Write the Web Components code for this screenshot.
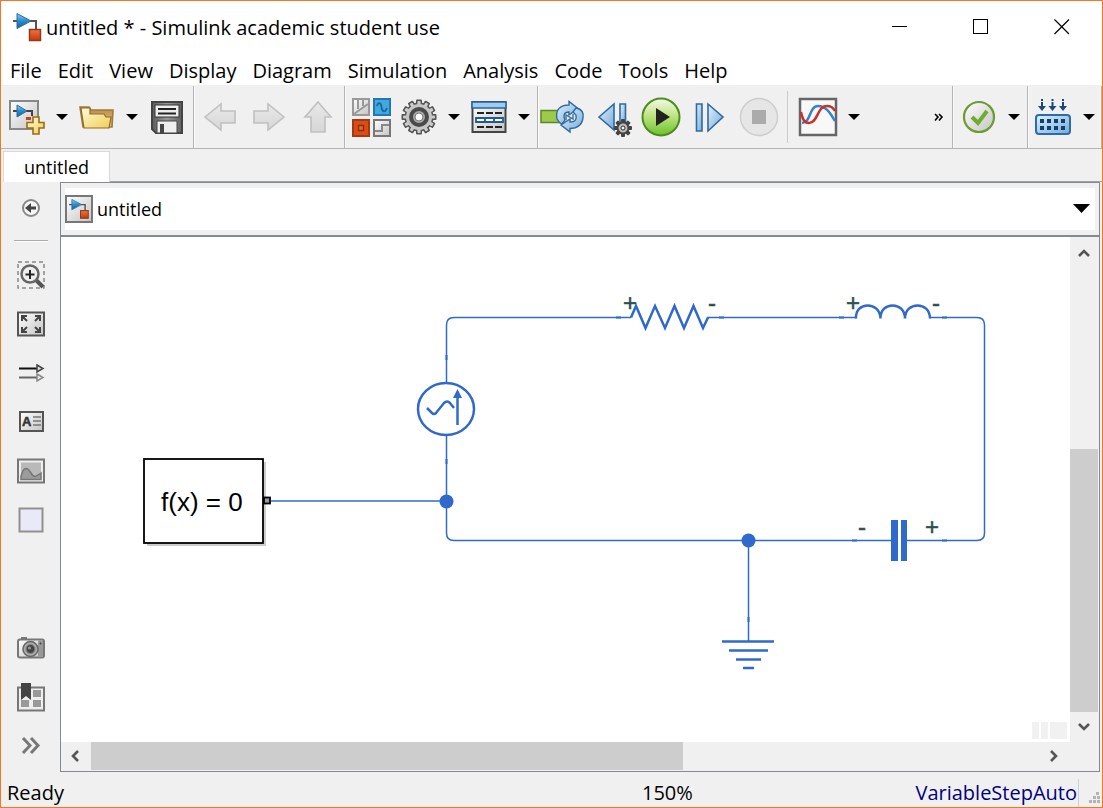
<!DOCTYPE html>
<html lang="en">
<head>
<meta charset="utf-8">
<title>untitled * - Simulink academic student use</title>
<style>
  body { margin: 0; font-family: "Open Sans", "Noto Sans", sans-serif; font-size: 20px; color: #000; }
</style>
</head>
<body>
<app-window></app-window>

<template id="icon-defs">
  <style>
    :host { display: block; line-height: 0; }
    svg { display: block; overflow: visible; }
  </style>
  <svg width="0" height="0" aria-hidden="true">
    <defs>
      <linearGradient id="grey" x1="0" y1="0" x2="1" y2="1"><stop offset="0" stop-color="#fff"/><stop offset="1" stop-color="#c4c4c4"/></linearGradient>
      <linearGradient id="dark" x1="0" y1="0" x2="1" y2="0"><stop offset="0" stop-color="#5c5c5c"/><stop offset=".5" stop-color="#999"/><stop offset="1" stop-color="#606060"/></linearGradient>
      <linearGradient id="pale" x1="0" y1="0" x2="0" y2="1"><stop offset="0" stop-color="#e9e9e9"/><stop offset="1" stop-color="#d6d6d6"/></linearGradient>
      <linearGradient id="blue" x1="0" y1="0" x2="1" y2="1"><stop offset="0" stop-color="#e2f1fd"/><stop offset="1" stop-color="#72abd9"/></linearGradient>
      <linearGradient id="deep" x1="0" y1="0" x2="0" y2="1"><stop offset="0" stop-color="#8fd0f2"/><stop offset=".5" stop-color="#2a8cc8"/><stop offset="1" stop-color="#1a5f9c"/></linearGradient>
      <linearGradient id="red" x1="0" y1="0" x2="0" y2="1"><stop offset="0" stop-color="#ec7545"/><stop offset="1" stop-color="#c9370b"/></linearGradient>
      <linearGradient id="gold" x1="0" y1="0" x2="1" y2="1"><stop offset="0" stop-color="#fffbd8"/><stop offset="1" stop-color="#f0ce55"/></linearGradient>
      <linearGradient id="tan" x1="0" y1="0" x2="0" y2="1"><stop offset="0" stop-color="#b98646"/><stop offset="1" stop-color="#e6c78f"/></linearGradient>
      <linearGradient id="green" x1="0" y1="0" x2="0" y2="1"><stop offset="0" stop-color="#f4fbe6"/><stop offset=".5" stop-color="#b9e37c"/><stop offset="1" stop-color="#6cc12c"/></linearGradient>
    </defs>
  </svg>
</template>

<script>
const SIMULINK_MARK = `
  <path d="M0 8H5M17 8H23V17" fill="none" stroke="#555" stroke-width="2"/>
  <path d="M4 0.5L18 8L4 15.5Z" fill="url(#deep)" stroke="#2a6da3"/>
  <rect x="16.5" y="16.5" width="11" height="11" fill="url(#red)" stroke="#8f3a1a" stroke-width="1.5"/>`;

const teeth = (cx, cy, r, n, w, h, fill) => Array.from({ length: n }, (_, i) =>
  `<rect x="${cx - w / 2}" y="${cy - r - h}" width="${w}" height="${h + 2}" rx="1" fill="${fill}" transform="rotate(${i * 360 / n} ${cx} ${cy})"/>`).join('');

/* name: [box size, drawing] */
const ICONS = {
  app: [28, SIMULINK_MARK],
  model: [28, `<rect x="1" y="1" width="26" height="26" fill="url(#grey)" stroke="#777" stroke-width="2"/><g transform="translate(4 4) scale(.7)">${SIMULINK_MARK}</g>`],
  new: [48, `
    <rect x="7" y="8" width="28" height="28" fill="url(#grey)" stroke="#888" stroke-width="2"/>
    <path d="M10 18H14M23 18H29V23" fill="none" stroke="#444" stroke-width="2"/>
    <path d="M14 12L24 18L14 24Z" fill="url(#deep)" stroke="#2a6da3"/>
    <path d="M23 24h5v3h-5z" fill="#c8411c"/>
    <path d="M30 24H36V29.5H41V35H36V41H30V35H24V29.5H30Z" fill="url(#gold)" stroke="#9a6d17" stroke-width="1.6"/>`],
  open: [48, `
    <path d="M10 34L7 14H16L18 17H40L39 34Z" fill="url(#tan)" stroke="#a27a38" stroke-width="1.6"/>
    <path d="M11 35L8 15H17V21H31L33 24H38L36 35Z" fill="url(#gold)" stroke="#8f6a2a" stroke-width="1.2"/>`],
  save: [48, `
    <path d="M9 9H39V40H13L9 36Z" fill="url(#dark)" stroke="#444" stroke-width="2"/>
    <rect x="12" y="12" width="24" height="12" fill="#eee" stroke="#333"/><path d="M15 16H33M15 20.5H33" stroke="#222" stroke-width="2"/>
    <path d="M14 40V28H34V40Z" fill="#eee" stroke="#444"/><path d="M17 31H21V40H17Z" fill="#444"/>`],
  back: [48, `<path d="M9 24L25 11V18H39V30H25V37Z" fill="url(#pale)" stroke="#c0c0c0" stroke-width="1.6"/>`],
  forward: [48, `<path d="M40 24L24 11V18H10V30H24V37Z" fill="url(#pale)" stroke="#c0c0c0" stroke-width="1.6"/>`],
  up: [48, `<path d="M26 9L39 24H33V39H19V24H13Z" fill="url(#pale)" stroke="#c0c0c0" stroke-width="1.6"/>`],
  library: [48, `
    <rect x="6" y="6" width="16" height="16" fill="url(#grey)" stroke="#999" stroke-width="2"/><path d="M11 7V16M16 7V13M7 21L21 11" stroke="#999" stroke-width="2"/>
    <rect x="27" y="6" width="16" height="16" fill="#43a8dc" stroke="#2277b4" stroke-width="2"/><path d="M30 13C31 9 34 9 34.5 14S38 20 40 15" fill="none" stroke="#14689e" stroke-width="1.8"/>
    <rect x="6" y="27" width="16" height="16" fill="#dc4b15" stroke="#a23a12" stroke-width="2"/><rect x="11.5" y="32.5" width="5" height="5" fill="#e46a33" stroke="#8f2c0a" stroke-width="1.5"/>
    <rect x="27" y="27" width="16" height="16" fill="url(#grey)" stroke="#777" stroke-width="2"/><path d="M28 38H35V32H42" fill="none" stroke="#888" stroke-width="2"/>`],
  gear: [48, `${teeth(24, 24, 13, 12, 6, 4.5, '#555')}<circle cx="24" cy="24" r="14.5" fill="#555"/>${teeth(24, 24, 12, 12, 3.2, 4, '#ccc')}<circle cx="24" cy="24" r="13" fill="#c6c6c6"/>
    <circle cx="24" cy="24" r="8" fill="#aaa" stroke="#4a4a4a" stroke-width="4"/><circle cx="24" cy="24" r="4" fill="#fff" stroke="#777"/>`],
  table: [48, `
    <rect x="7.5" y="9" width="33" height="30" fill="url(#grey)" stroke="#444" stroke-width="2"/><rect x="7" y="9" width="34" height="6" fill="#9ccdf0" stroke="#2c6296" stroke-width="1.5"/>
    <path d="M12 20H37M12 34H37" stroke="#222" stroke-width="2" stroke-dasharray="7 2"/><path d="M11 25H38V29H11ZM20 25V29M29 25V29" fill="#fff" stroke="#1c5a98" stroke-width="1.8"/>`],
  update: [48, `
    <rect x="1" y="17.5" width="19" height="12" fill="#9ccb4b" stroke="#5d8526" stroke-width="1.5"/>
    <circle cx="30" cy="24" r="8" fill="#d7e9f8"/>
    <path d="M17 26C15 17 20 12 29 12V8.500L38 15.500L29 22V19C24 19 23 22 25 27L22 31C19 30 18 28 17 26Z" fill="url(#blue)" stroke="#316a9c" stroke-width="1.4"/>
    <path d="M36 15C42 16 44 20 43 25C42 32 38 35.500 30 35.500V39L21 32L30 26V29C35 29 37 27 36 22L33 19Z" fill="url(#blue)" stroke="#316a9c" stroke-width="1.4"/>
    <path d="M26 27V22L33 26V21" fill="none" stroke="#4c6f8f" stroke-width="1.4"/>`],
  stepback: [48, `
    <path d="M11 24L26 11V37Z" fill="url(#blue)" stroke="#316a9c" stroke-width="1.6"/><path d="M32 11H37.5V32H32Z" fill="url(#blue)" stroke="#316a9c" stroke-width="1.6"/>
    ${teeth(35, 35, 6, 8, 4, 3, '#444')}<circle cx="35" cy="35" r="5.5" fill="#bbb" stroke="#444" stroke-width="2"/><circle cx="35" cy="35" r="2" fill="#eee" stroke="#333"/>`],
  run: [48, `<circle cx="25" cy="24" r="18.5" fill="url(#green)" stroke="#4f8a22" stroke-width="2"/><path d="M20 15L34 24L20 33Z" fill="#222"/>`],
  stepforward: [48, `<path d="M12.5 11H18V38H12.5Z" fill="url(#blue)" stroke="#316a9c" stroke-width="1.6"/><path d="M24 11L39 24L24 38Z" fill="url(#blue)" stroke="#316a9c" stroke-width="1.6"/>`],
  stop: [48, `<circle cx="27" cy="24" r="18.5" fill="#e6e6e6" stroke="#cdcdcd" stroke-width="1.5"/><rect x="20" y="17" width="14" height="14" fill="#ababab"/>`],
  scope: [48, `
    <rect x="5" y="6" width="36" height="36" fill="#f8f8f8" stroke="#666" stroke-width="2.5"/>
    <path d="M7 30C16 30 14 13 23 13S36 22 40 28" fill="none" stroke="#3b80c6" stroke-width="2.5"/><path d="M6 19C8 28 10 30 14 30C23 30 22 13 32 13C36 13 38 14 40 18" fill="none" stroke="#c9302c" stroke-width="2.5"/>`],
  check: [48, `<circle cx="24" cy="24" r="15" fill="url(#grey)" stroke="#6c9c30" stroke-width="2.2"/><path d="M17 24L23 30L32 18" fill="none" stroke="#6fab2e" stroke-width="4"/>`],
  build: [48, `
    <path d="M12 6V8M22.5 6V8M33 6V8M12 9V15M22.5 9V15M33 9V15" stroke="#174a7c" stroke-width="2"/><path d="M8 13H16L12 18ZM18.5 13H26.5L22.5 18ZM29 13H37L33 18Z" fill="#174a7c"/>
    <rect x="6" y="22" width="34" height="19" rx="3" fill="url(#blue)" stroke="#2d6ca8" stroke-width="2"/>
    <path d="M10 28H37M10 35H37" stroke="#123f6c" stroke-width="4" stroke-dasharray="4 3"/>`],
  hide: [34, `<circle cx="17" cy="17" r="8" fill="#f6f6f6" stroke="#888" stroke-width="2"/><path d="M11 17L17 12V15.5H22V18.5H17V22Z" fill="#444"/>`],
  zoom: [34, `
    <rect x="4" y="4" width="26" height="26" fill="none" stroke="#888" stroke-dasharray="4 3" stroke-width="1.5"/><path d="M22 22L29 29" stroke="#555" stroke-width="4"/>
    <circle cx="16" cy="16" r="8.5" fill="#eee" stroke="#666" stroke-width="2.5"/><path d="M16 12V21M11.500 16.5H20.5" stroke="#222" stroke-width="2"/>`],
  fit: [34, `<rect x="4" y="5.5" width="26" height="23" fill="url(#grey)" stroke="#555" stroke-width="2"/>
    <path d="M8 14V9H13M8.5 9.5L13 14M21 9H26V14M25.5 9.5L21 14M8 20V25H13M8.5 24.5L13 20M21 25H26V20M25.5 24.5L21 20" fill="none" stroke="#444" stroke-width="2"/>`],
  signals: [34, `<path d="M5 12.5H24" stroke="#111" stroke-width="2"/><path d="M5 21.5H24" stroke="#666" stroke-width="2"/><path d="M23 9L29 12.5L23 16Z" fill="#ddd" stroke="#444" stroke-width="1.5"/><path d="M23 18L29 21.5L23 25Z" fill="#eee" stroke="#888" stroke-width="1.5"/>`],
  note: [34, `<rect x="6" y="7" width="23" height="19" fill="url(#grey)" stroke="#555" stroke-width="2"/><text x="8" y="21" font-family="Liberation Sans" font-weight="700" font-size="13" fill="#333" stroke="#333" stroke-width=".5">A</text><path d="M19 12H27M19 16H27M19 20H27" stroke="#777" stroke-width="1.5"/>`],
  image: [34, `<rect x="4" y="5.5" width="26" height="23" fill="#eee" stroke="#777" stroke-width="2"/><rect x="7" y="8.5" width="20" height="17" fill="#b9b9b9"/><path d="M7 22C10 11 14 14 17 19S21 23 27 19V25.500H7Z" fill="#9c9c9c" stroke="#777" stroke-width="1.5"/>`],
  area: [34, `<rect x="5.5" y="5.5" width="23" height="23" fill="#e9e9f8" stroke="#909090" stroke-width="2"/>`],
  camera: [34, `<path d="M7 6H13V9H7Z" fill="#777"/><rect x="4" y="8.5" width="26" height="18" rx="2" fill="url(#grey)" stroke="#777" stroke-width="2"/><rect x="24" y="9.5" width="5" height="16" fill="#999"/>
    <circle cx="16.5" cy="18" r="7.5" fill="#aaa" stroke="#666" stroke-width="1.5"/><circle cx="16.5" cy="18" r="4.5" fill="#444" stroke="#888"/><circle cx="15.5" cy="17" r="1.5" fill="#999"/><circle cx="26.5" cy="12.5" r="1" fill="#444"/>`],
  bookmark: [34, `<rect x="4" y="7.5" width="26" height="23" fill="#eee" stroke="#777" stroke-width="2"/><path d="M19 10H27V17H19ZM19 20H27V27H19ZM7 20H15V27H7Z" fill="#999"/><path d="M7 3H17V20L12 16L7 20Z" fill="#444"/>`],
  more: [34, `<path d="M9 9L16 16.5L9 24M17 9L24 16.5L17 24" fill="none" stroke="#777" stroke-width="3"/>`],
  caret: [22, `<path d="M5 8H17L11 14Z"/>`],
  bigcaret: [22, `<path d="M3 6H20L11.5 15Z"/>`],
  overflow: [22, `<path d="M7 8L10 11L7 14.500M11 8L14 11L11 14.500" fill="none" stroke="#000" stroke-width="1.6"/>`],
  min: [22, `<path d="M3 9.5H18" stroke="#000"/>`],
  max: [22, `<rect x="3.5" y="2.5" width="14" height="14" fill="none" stroke="#000"/>`],
  close: [22, `<path d="M3.500 2.5L18 17M18 2.5L3.500 17" stroke="#000" stroke-width="1.2"/>`],
  chevup: [22, `<path d="M6 15L11 10L16 15" fill="none" stroke="#555" stroke-width="2.6"/>`],
  chevdown: [22, `<path d="M6 8L11 13L16 8" fill="none" stroke="#555" stroke-width="2.6"/>`],
  chevleft: [22, `<path d="M13 6L8 11L13 16" fill="none" stroke="#555" stroke-width="2.6"/>`],
  chevright: [22, `<path d="M7 6L12 11L7 16" fill="none" stroke="#555" stroke-width="2.6"/>`],
  grip: [12, `<path d="M7 0h3v3h-3zM4 4h3v3h-3zM8 4h3v3h-3zM0 8h3v3h-3zM4 8h3v3h-3zM8 8h3v3h-3z" fill="#b4b4b4"/>`],
};

const define = (name, render) => customElements.define(name, class extends HTMLElement {
  connectedCallback() {
    if (this.shadowRoot) return;
    this.attachShadow({ mode: 'open' }).innerHTML = render(this);
  }
});

customElements.define('ui-icon', class extends HTMLElement {
  connectedCallback() {
    if (this.shadowRoot) return;
    const root = this.attachShadow({ mode: 'open' });
    root.append(document.getElementById('icon-defs').content.cloneNode(true));
    const [size, art] = ICONS[this.getAttribute('name')];
    root.querySelector('svg').style.position = 'absolute';
    const holder = document.createElement('div');
    holder.innerHTML = `<svg width="${size}" height="${size}" viewBox="0 0 ${size} ${size}" aria-hidden="true">${art}</svg>`;
    root.append(holder);
  }
});

/* A flat button that holds one icon; --w and --h set its box. */
define('icon-button', el => `
  <style>
    :host { display: block; width: var(--w, 48px); height: var(--h, 48px); flex: none; }
    button { width: 100%; height: 100%; padding: 0; border: 0; background: none; display: flex; align-items: center; justify-content: center; }
  </style>
  <button type="button" aria-label="${el.getAttribute('label')}"><ui-icon name="${el.getAttribute('icon')}"></ui-icon></button>`);

define('title-bar', () => `
  <style>
    :host { display: flex; align-items: center; height: 53px; padding-left: 12px; background: #fff; --w: 81px; --h: 48px; }
    ui-icon { margin-bottom: 2px; }
    h1 { margin: 0 auto 0 5px; font-size: 20px; line-height: 28px; font-weight: 400; white-space: nowrap; }
  </style>
  <ui-icon name="app"></ui-icon><h1><slot></slot></h1>
  <icon-button icon="min" label="Minimize"></icon-button>
  <icon-button icon="max" label="Maximize"></icon-button>
  <icon-button icon="close" label="Close"></icon-button>`);

define('menu-bar', () => `
  <style>
    :host { display: block; background: #fff; border-bottom: 1px solid #f0f0f0; }
    nav { display: flex; gap: 16px; height: 31px; padding: 2px 0 0 9px; box-sizing: border-box; align-items: center; }
    button { font: inherit; line-height: 28px; padding: 0; border: 0; background: none; color: inherit; }
  </style>
  <nav>${['File', 'Edit', 'View', 'Display', 'Diagram', 'Simulation', 'Analysis', 'Code', 'Tools', 'Help'].map(t => `<button type="button">${t}</button>`).join('')}</nav>`);

define('tool-group', () => `
  <style>
    :host { display: flex; align-items: center; padding: 0 2px; border-right: 1px solid #b4b4b4; box-shadow: inset 1px 0 #fafafa; }
    :host([wide]) { flex: 1; }
    :host([roomy]) { padding-right: 4px; }
    :host(:last-of-type) { padding-right: 1px; }
  </style><slot></slot>`);

const tool = (icon, label) => `<icon-button icon="${icon}" label="${label}"></icon-button>`;
const drop = label => `<icon-button class="drop" icon="caret" label="${label} options"></icon-button>`;

define('tool-bar', () => `
  <style>
    :host { display: flex; height: 62px; background: #f0f0f0; border-bottom: 1px solid #b4b4b4; }
    .drop { --w: 22px; }
    .rule { width: 1px; height: 52px; margin: 0 7px; background: #ccc; }
    .over { --w: 22px; margin-left: auto; }
  </style>
  <tool-group>${tool('new', 'New')}${drop('New')}${tool('open', 'Open')}${drop('Open')}${tool('save', 'Save')}</tool-group>
  <tool-group roomy>${tool('back', 'Back')}${tool('forward', 'Forward')}${tool('up', 'Up to parent')}</tool-group>
  <tool-group>${tool('library', 'Library browser')}${tool('gear', 'Configuration')}${drop('Configuration')}${tool('table', 'Model explorer')}${drop('Explorer')}</tool-group>
  <tool-group wide>${tool('update', 'Update')}${tool('stepback', 'Step back')}${tool('run', 'Run')}${tool('stepforward', 'Step forward')}${tool('stop', 'Stop')}
    <div class="rule"></div>${tool('scope', 'Data inspector')}${drop('Inspector')}
    <icon-button class="over" icon="overflow" label="More tools"></icon-button></tool-group>
  <tool-group>${tool('check', 'Model advisor')}${drop('Advisor')}</tool-group>
  <tool-group>${tool('build', 'Build')}${drop('Build')}</tool-group>`);

define('model-tabs', () => `
  <style>
    :host { display: flex; align-items: flex-end; height: 33px; padding-left: 2px; background: #f0f0f0; }
    [role=tab] { font: inherit; font-size: 18px; line-height: 28px; padding: 0 20px; border: 1px solid #d9d9d9; border-bottom: 0; background: #fff; color: inherit; height: 31px; }
    [role=tablist] { display: flex; }
    .rest { flex: 1; height: 31px; border-bottom: 1px solid #a0a3a8; box-sizing: border-box; }
  </style>
  <div role="tablist"><button role="tab" type="button" aria-selected="true"><slot></slot></button></div><div class="rest"></div>`);

define('palette-bar', () => `
  <style>
    :host { display: flex; flex-direction: column; align-items: center; width: 59px; padding-bottom: 2px; background: #f0f0f0; --w: 49px; --h: 49px; flex: none; }
    .first { --h: 52px; }
    hr { width: 34px; margin: 6px 0 8px; border: 0; border-top: 1px solid #aaa; border-bottom: 1px solid #fff; }
    .gap { flex: 1; }
  </style>
  <icon-button class="first" icon="hide" label="Hide explorer bar"></icon-button><hr>
  ${[['zoom', 'Zoom'], ['fit', 'Fit to view'], ['signals', 'Sample time'], ['note', 'Annotation'], ['image', 'Image'], ['area', 'Area']].map(a => tool(...a)).join('')}
  <div class="gap"></div>
  ${[['camera', 'Screenshot'], ['bookmark', 'Viewmarks'], ['more', 'More palette tools']].map(a => tool(...a)).join('')}`);

define('crumb-bar', () => `
  <style>
    :host { display: block; padding: 5px 4px; background: #f0f0f0; border-bottom: 2px solid #858992; }
    div { display: flex; align-items: center; height: 42px; background: #fff; --w: 28px; --h: 42px; }
    button { font: inherit; font-size: 18px; line-height: 28px; padding: 0; margin: 0 auto 0 4px; border: 0; background: none; color: inherit; }
  </style>
  <div><ui-icon name="model"></ui-icon><button type="button"><slot></slot></button><icon-button icon="bigcaret" label="Model path"></icon-button></div>`);

define('scroll-track', el => {
  const v = el.hasAttribute('vertical');
  return `
  <style>
    :host { display: flex; flex-direction: ${v ? 'column' : 'row'}; background: #f0f0f0; ${v ? 'width: 28px' : 'height: 28px'}; --w: ${v ? 28 : 30}px; --h: ${v ? 30 : 28}px; }
    .before { flex: ${el.getAttribute('before')} 0 0; } .thumb { flex: ${el.getAttribute('thumb')} 0 0; background: #cdcdcd; } .after { flex: ${el.getAttribute('after')} 0 0; }
  </style>
  <icon-button icon="${v ? 'chevup' : 'chevleft'}" label="Scroll ${v ? 'up' : 'left'}"></icon-button>
  <div class="before"></div><div class="thumb"></div><div class="after"></div>
  <icon-button icon="${v ? 'chevdown' : 'chevright'}" label="Scroll ${v ? 'down' : 'right'}"></icon-button>`;
});

define('circuit-canvas', () => `
  <style>
    :host { display: block; position: relative; overflow: hidden; background: #fff; min-height: 480px; min-width: 0; }
    svg { display: block; }
    .wire { fill: none; stroke: #3069cc; stroke-width: 1.5; }
    .part { fill: none; stroke: #3069cc; stroke-width: 2.5; }
    .stub { fill: none; stroke: #3069cc; stroke-width: 2; }
    .solid { fill: #3069cc; }
    text { font-family: "Liberation Sans", Arial, sans-serif; }
    .sign { font-size: 24px; fill: #2f4f4f; stroke: #2f4f4f; stroke-width: .5; text-anchor: middle; }
    .hint { position: absolute; right: 3px; bottom: 3px; display: flex; gap: 2px; }
    .hint i { width: 7px; height: 17px; background: #f1f1f1; } .hint i:last-child { width: 17px; }
  </style>
  <svg width="1009" height="500" viewBox="61 237 1009 500" role="img" aria-label="RLC circuit">
    <path class="wire" d="M446.5 382V325Q446.5 317.5 454 317.5H631M707 317.5H856M930 317.5H977Q984.5 317.5 984.5 325V533Q984.5 540.5 977 540.5H907M891 540.5H454Q446.5 540.5 446.5 533V436M271 501H446M748.5 540V641"/>
    <path class="stub" d="M616 317.5H621M719 317.5H724M839 317.5H844M942 317.5H947M852 540.5H857M942 540.5H947M446.5 355V360M446.5 459V464M748.5 617V622"/>
    <path class="part" d="M631 317.5L636 306L645.5 328L655 306L665 328L674.5 306L684 328L693.5 306L703 328L708 317.5"/>
    <path class="part" d="M856 318.5C855 301 880 301 880.5 318.5C880 301 905 301 905 318.5C905 301 930 301 930 318.5"/>
    <path class="solid" d="M891 520H898V561H891ZM901 520H907V561H901Z"/>
    <path class="part" d="M722 641.5H774M729 650.5H768M736 659.5H761M743 668H754"/>
    <ellipse class="part" cx="446" cy="409" rx="28" ry="26"/>
    <path class="part" d="M427 408L432 413Q434 415 436 413L444 403Q447 400 450 403L454 408M457.5 425V394"/>
    <path class="solid" d="M457.5 389L462 398H453Z"/>
    <circle class="solid" cx="446.5" cy="501.5" r="7"/><circle class="solid" cx="748.5" cy="540.5" r="7"/>
    <rect x="147" y="462" width="119" height="84" rx="1" fill="#ccc"/>
    <rect x="144" y="459" width="119" height="84" fill="#fff" stroke="#000" stroke-width="1.8"/>
    <rect x="264" y="497.5" width="6" height="6" fill="#999" stroke="#000" stroke-width="1.8"/>
    <text x="161" y="511" font-size="26">f(x) = 0</text>
    <text class="sign" x="630" y="311">+</text><text class="sign" x="712" y="311">-</text>
    <text class="sign" x="853" y="311">+</text><text class="sign" x="936" y="311">-</text>
    <text class="sign" x="862" y="535">-</text><text class="sign" x="932" y="535">+</text>
  </svg>
  <div class="hint"><i></i><i></i><i></i></div>`);

define('model-editor', () => `
  <style>
    :host { display: flex; flex-direction: column; flex: 1; min-width: 0; margin-right: 2px; border: 1px solid #858992; box-sizing: border-box; }
    .view { flex: 1; display: grid; grid-template-columns: minmax(0, 1fr) 29px; grid-template-rows: 1fr 29px; }
    .corner { background: #f0f0f0; }
  </style>
  <crumb-bar><slot></slot></crumb-bar>
  <div class="view">
    <circuit-canvas></circuit-canvas>
    <scroll-track vertical before="182" thumb="262" after="0"></scroll-track>
    <scroll-track before="0" thumb="592" after="357"></scroll-track>
    <div class="corner"></div>
  </div>`);

define('status-bar', () => `
  <style>
    :host { display: grid; grid-template-columns: 641fr 460fr; height: 35px; box-sizing: border-box; padding-top: 7px; background: #f0f0f0; line-height: 28px; }
    .ready { padding-left: 6px; }
    .right { display: flex; justify-content: space-between; }
    .solver { display: flex; gap: 1px; }
    a { color: #000080; text-decoration: none; }
    .rule { width: 1px; height: 28px; background: #d0d0d0; margin-right: 9px; }
    .grip { align-self: flex-end; padding: 0 1px 3px 0; }
  </style>
  <span class="ready">Ready</span>
  <div class="right"><span>150%</span><div class="solver"><a href="#solver">VariableStepAuto</a><div class="rule"></div><ui-icon class="grip" name="grip"></ui-icon></div></div>`);

define('app-window', () => `
  <style>
    :host { display: flex; flex-direction: column; min-height: 100vh; box-sizing: border-box; border: 1px solid #f97424; background: #f0f0f0; }
    main { display: flex; flex: 1; }
  </style>
  <title-bar>untitled * - Simulink academic student use</title-bar>
  <menu-bar></menu-bar>
  <tool-bar></tool-bar>
  <model-tabs>untitled</model-tabs>
  <main><palette-bar></palette-bar><model-editor>untitled</model-editor></main>
  <status-bar></status-bar>`);
</script>
</body>
</html>
